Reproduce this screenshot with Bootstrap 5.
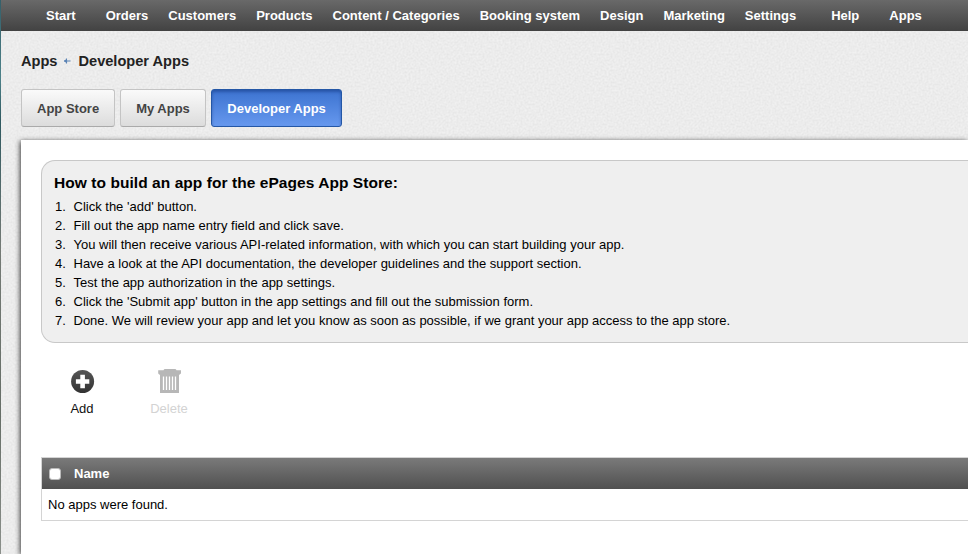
<!DOCTYPE html>
<html lang="en">
<head>
<meta charset="utf-8">
<meta name="viewport" content="width=device-width, initial-scale=1">
<title>Developer Apps</title>
<link href="https://cdn.jsdelivr.net/npm/bootstrap@5.3.0/dist/css/bootstrap.min.css" rel="stylesheet">
<style>
body{font-family:"Liberation Sans",Arial,sans-serif;font-size:13px;line-height:19px;color:#111;height:554px;
 background:linear-gradient(#35606a,#4d8189 14%,#2f5960 22%,#747a75 45%,#666e67 75%,#8b908b);padding-left:1px}
.shell{height:554px;background-color:#ececec;
 background-image:url("data:image/svg+xml,%3Csvg xmlns='http://www.w3.org/2000/svg' width='128' height='128'%3E%3Cfilter id='n' x='0' y='0' width='100%25' height='100%25'%3E%3CfeTurbulence type='fractalNoise' baseFrequency='.5' numOctaves='2' stitchTiles='stitch'/%3E%3CfeColorMatrix values='0 0 0 0 0 0 0 0 0 0 0 0 0 0 0 .08 0 0 0 -.018'/%3E%3C/filter%3E%3Crect width='128' height='128' fill='%23f1f1f1'/%3E%3Crect width='128' height='128' filter='url(%23n)'/%3E%3C/svg%3E")}
.topbar{height:31px;background:linear-gradient(#696969,#424242);padding:0 0 0 45px;gap:20px}
.topbar .nav-link{color:#fff;font-weight:700;padding:0;white-space:nowrap}
.gap-start{margin-right:10px}
.gap-settings{margin-right:15px}
.crumbs{height:58px;padding:3px 0 0 20px;font-size:14.6px;font-weight:700;color:#222}
.crumb-arrow{margin:0 7px 2px 6px}
.tabs{gap:5px;padding-left:20px}
.tab-btn{height:38px;padding:2px 15px 0;font-size:13px;font-weight:700;border-radius:3px;color:#444;border:1px solid #c4c4c4;border-bottom-color:#aaa;background:linear-gradient(#fafafa,#dcdcdc)}
.tab-btn.active{color:#fff!important;padding-right:15.5px;padding-left:15.5px;border-color:#2457a6!important;background:linear-gradient(#3c73d0,#6698ee);box-shadow:inset 0 2px 3px rgba(0,30,90,.35)}
.sheet{margin:13px 0 0 20px;height:414px;background:#fff;padding:20px 0 0 20px;box-shadow:-1px 1px 5px rgba(0,0,0,.75)}
.howto{height:183px;background:#efefef;border:1px solid #c8c8c8;border-right:0;border-radius:14px 0 0 14px;padding:12px 0 0 12px;color:#000}
.howto h2{font-size:15.5px;letter-spacing:.06px;line-height:19px;font-weight:700;margin:0 0 5px}
.howto ol{counter-reset:step}
.howto li{counter-increment:step}
.howto li::before{content:counter(step) ".";display:inline-block;width:19.5px;padding-left:1px}
.tools{padding:24px 0 0 14px;height:114px}
.tool{width:54px;line-height:16px}
.tool svg{margin-bottom:6px}
.tool-delete{margin-left:33px;color:#d3d3d3}
.apps{border:1px solid #d4d4d4;border-right:0;height:64px}
.apps-head{height:31px;background:linear-gradient(#7a7a7a,#505050);color:#fff;font-weight:700;padding-left:7px}
.apps-head .form-check-input{width:12px;height:12px;margin:1px 13px 0 0;border:1px solid #bbb;border-radius:3px;background:#fff}
.apps-row{height:31px;padding-left:6px;color:#000}
</style>
</head>
<body class="overflow-hidden">
<div class="shell overflow-hidden">
 <nav class="topbar nav flex-nowrap align-items-center">
  <a class="nav-link gap-start" href="#">Start</a>
  <a class="nav-link" href="#">Orders</a>
  <a class="nav-link" href="#">Customers</a>
  <a class="nav-link" href="#">Products</a>
  <a class="nav-link" href="#">Content / Categories</a>
  <a class="nav-link" href="#">Booking system</a>
  <a class="nav-link" href="#">Design</a>
  <a class="nav-link" href="#">Marketing</a>
  <a class="nav-link gap-settings" href="#">Settings</a>
  <a class="nav-link gap-start" href="#">Help</a>
  <a class="nav-link" href="#">Apps</a>
 </nav>
 <div class="crumbs d-flex align-items-center">
  <span>Apps</span>
  <svg class="crumb-arrow" width="8" height="6" viewBox="0 0 8 6"><path d="M1 3h6.500M3.500 .5v5" stroke="#5b83b5" stroke-width="1.1" fill="none"/><path d="M.8 3l2.700-2v4z" fill="#5b83b5"/></svg>
  <span>Developer Apps</span>
 </div>
 <div class="tabs d-flex">
  <button class="btn tab-btn">App Store</button>
  <button class="btn tab-btn">My Apps</button>
  <button class="btn tab-btn active">Developer Apps</button>
 </div>
 <main class="sheet">
  <section class="howto">
   <h2>How to build an app for the ePages App Store:</h2>
   <ol class="list-unstyled mb-0">
    <li>Click the 'add' button.</li>
    <li>Fill out the app name entry field and click save.</li>
    <li>You will then receive various API-related information, with which you can start building your app.</li>
    <li>Have a look at the API documentation, the developer guidelines and the support section.</li>
    <li>Test the app authorization in the app settings.</li>
    <li>Click the 'Submit app' button in the app settings and fill out the submission form.</li>
    <li>Done. We will review your app and let you know as soon as possible, if we grant your app access to the app store.</li>
   </ol>
  </section>
  <div class="tools d-flex align-items-start">
   <div class="tool d-flex flex-column align-items-center">
    <svg width="26" height="28" viewBox="0 0 26 28"><defs><linearGradient id="dark" x2="0" y2="1"><stop stop-color="#555"/><stop offset="1" stop-color="#333"/></linearGradient></defs><circle cx="13.6" cy="14.5" r="11.5" fill="url(#dark)"/><path d="M13.6 7.8v13.4M6.9 14.5h13.4" stroke="#fff" stroke-width="4.6"/></svg>
    <span>Add</span>
   </div>
   <div class="tool tool-delete d-flex flex-column align-items-center">
    <svg width="26" height="28" viewBox="0 0 26 28"><path d="M2.2 3.2H7.5Q8 2 9 2h10q1 0 1.5 1.2H25v2.8q0 1-1 1.3L23 8v18H4V8l-1-.7Q2.2 7 2.2 6z" fill="#b7b7b7"/><path d="M7.500 9.500v13.500M10.500 9.500v13.500M13.500 9.500v13.500M16.500 9.500v13.500M19.500 9.500v13.500" stroke="#fff" stroke-width="1.3"/></svg>
    <span>Delete</span>
   </div>
  </div>
  <section class="apps">
   <div class="apps-head d-flex align-items-center"><input class="form-check-input" type="checkbox" aria-label="Select all"><span>Name</span></div>
   <div class="apps-row d-flex align-items-center">No apps were found.</div>
  </section>
 </main>
</div>
<script src="https://cdn.jsdelivr.net/npm/bootstrap@5.3.0/dist/js/bootstrap.bundle.min.js"></script>
</body>
</html>
